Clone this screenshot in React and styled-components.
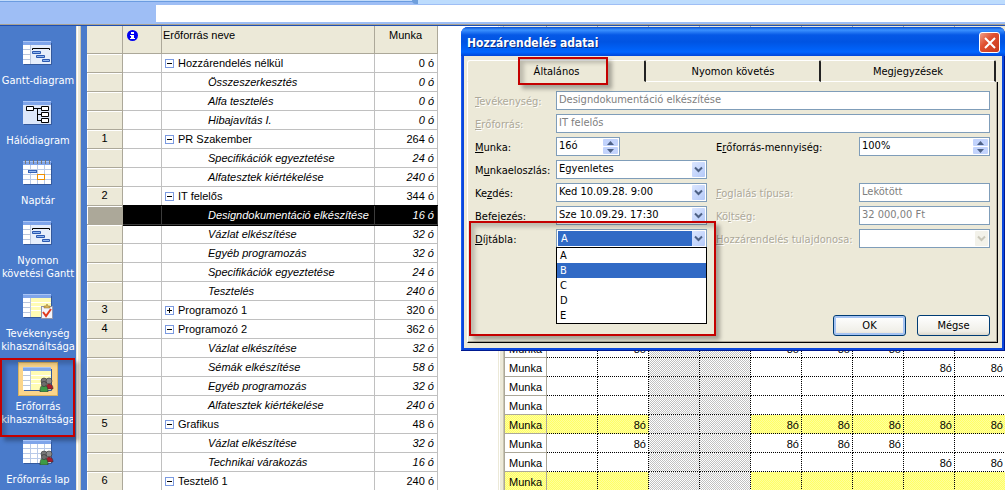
import React, { useState } from "react";
import styled, { createGlobalStyle, css } from "styled-components";

const views = [
  { icon: "gantt", lines: ["Gantt-diagram"] },
  { icon: "network", lines: ["Hálódiagram"] },
  { icon: "calendar", lines: ["Naptár"] },
  { icon: "gantt", lines: ["Nyomon", "követési Gantt"] },
  { icon: "task", lines: ["Tevékenység", "kihasználtsága"] },
  { icon: "resource", lines: ["Erőforrás", "kihasználtsága"], active: true },
  { icon: "sheet", lines: ["Erőforrás lap"] },
];

const resources = [
  { name: "Hozzárendelés nélkül", work: "0 ó", group: true },
  { name: "Összeszerkesztés", work: "0 ó" },
  { name: "Alfa tesztelés", work: "0 ó" },
  { name: "Hibajavítás I.", work: "0 ó" },
  { id: 1, name: "PR Szakember", work: "264 ó", group: true },
  { name: "Specifikációk egyeztetése", work: "24 ó" },
  { name: "Alfatesztek kiértékelése", work: "240 ó" },
  { id: 2, name: "IT felelős", work: "344 ó", group: true },
  { name: "Designdokumentáció elkészítése", work: "16 ó", selected: true },
  { name: "Vázlat elkészítése", work: "32 ó" },
  { name: "Egyéb programozás", work: "32 ó" },
  { name: "Specifikációk egyeztetése", work: "24 ó" },
  { name: "Tesztelés", work: "240 ó" },
  { id: 3, name: "Programozó 1", work: "320 ó", group: true, closed: true },
  { id: 4, name: "Programozó 2", work: "362 ó", group: true },
  { name: "Vázlat elkészítése", work: "32 ó", detail: "Munka", days: [1, 4, 5, 6] },
  { name: "Sémák elkészítése", work: "58 ó", detail: "Munka", days: [7, 8] },
  { name: "Egyéb programozás", work: "32 ó", detail: "Munka" },
  { name: "Alfatesztek kiértékelése", work: "240 ó", detail: "Munka" },
  { id: 5, name: "Grafikus", work: "48 ó", group: true, detail: "Munka", days: [1, 4, 5, 6, 7, 8] },
  { name: "Vázlat elkészítése", work: "32 ó", detail: "Munka", days: [1, 4, 5, 6] },
  { name: "Technikai várakozás", work: "16 ó", detail: "Munka", days: [7, 8] },
  { id: 6, name: "Tesztelő 1", work: "240 ó", group: true, detail: "Munka" },
];

const dayColumns = [0, 1, 2, 3, 4, 5, 6, 7, 8];
const weekend = [2, 3];
const rates = ["A", "B", "C", "D", "E"];

const People = () => (
  <g stroke="#333" strokeWidth="0.6">
    <circle cx="22" cy="15" r="3" fill="#777" />
    <circle cx="27" cy="15" r="3" fill="#8b8b8b" />
    <path d="M24 23c0-4 1-5 3-5s4 1 4 5z" fill="#a81c2c" />
    <path d="M18 26c0-5 1-7 4-7s4 3 4 7z" fill="#3d9b45" />
    <circle cx="22" cy="18" r="2.600" fill="#6d6d6d" />
  </g>
);

const ViewIcon = ({ type }) => {
  const yellow = type === "task" || type === "resource";
  const grid = type === "sheet" || type === "calendar";
  return (
    <svg width="32" height="26" viewBox="0 0 32 26">
      <path d="M2 24.500h27.500V3" fill="none" stroke="#34599c" />
      <rect x="1" y="1" width="28" height="23" fill="#fff" />
      <rect x="1" y="1" width="28" height="4" fill="#7fa5ea" />
      <path d="M1 1.500h28" stroke="#a9c5f6" />
      {type === "network" && (
        <g>
          <rect x="1" y="5" width="28" height="19" fill="#dce7fa" />
          <path d="M11 8.500h8M15.500 8v12.500M15 14.500h4M15 20.500h4" stroke="#000" fill="none" />
          <path d="M4.500 6.500h7v4h-7zM19.500 6.500h7v4h-7zM19.500 12.500h7v4h-7zM19.500 18.500h7v4h-7z" fill="#fff" stroke="#000" />
        </g>
      )}
      {grid && (
        <g>
          <rect x="1" y="5" width="28" height="19" fill="#fff" />
          <path d="M1 9.500h28M1 14.500h28M1 19.500h28M8.500 5v19M15.500 5v19M22.500 5v19" stroke="#b9cae8" />
        </g>
      )}
      {type === "calendar" && (
        <g>
          <path d="M3.500 0v4M7.500 0v4M11.500 0v4M15.500 0v4M19.500 0v4M23.500 0v4M27.500 0v4" stroke="#777" />
          <rect x="6.500" y="10.500" width="8" height="2" fill="#94b8f0" stroke="#3764b8" />
          <rect x="15.500" y="14.500" width="7" height="5" fill="#fff" stroke="#f09000" />
        </g>
      )}
      {type === "gantt" && (
        <g>
          <rect x="8" y="5" width="21" height="19" fill="#e6eefb" />
          <path d="M1 9.500h7M1 14.500h7M1 19.500h7M8.500 5v19" stroke="#b9c6dd" />
          <path d="M10.500 10V8.500h17V10" fill="none" stroke="#000" />
          <path
            d="M10.500 11.500h8v2h-8zM14.500 15.500h8v2h-8zM20.500 19.500h7v2h-7z"
            fill="#8db5ef"
            stroke="#2c59b0"
          />
        </g>
      )}
      {yellow && (
        <g>
          <rect x="8" y="5" width="21" height="19" fill="#fffcb4" />
          <path d="M8 9.500h21M8 13.500h21M8 17.500h21" stroke="#fff" />
          <path d="M1 9.500h7M1 14.500h7M1 19.500h7M8.500 5v19" stroke="#b9c6dd" />
        </g>
      )}
      {type === "task" && (
        <g>
          <rect x="19.500" y="13.500" width="11" height="12" fill="#f3f5fc" stroke="#8f96ad" />
          <path d="M22 15v-2h2l1-2 1 2h2v2z" fill="#d9b45a" stroke="#8c6d24" strokeWidth="0.5" />
          <path d="M21 19l3 4 5-7" stroke="#e03a1c" strokeWidth="2" fill="none" />
        </g>
      )}
      {(type === "resource" || type === "sheet") && <People />}
    </svg>
  );
};

const Chevron = () => (
  <svg width="9" height="7" viewBox="0 0 9 7">
    <path d="M1 1.500l3.500 3.500L8 1.500" fill="none" stroke="currentColor" strokeWidth="2" />
  </svg>
);

const Triangle = ({ down }) => (
  <svg width="7" height="4" viewBox="0 0 7 4">
    <path d={down ? "M0 0h7L3.500 4z" : "M0 4h7L3.500 0z"} fill="#4d6185" />
  </svg>
);

const Combo = ({ id, value, disabled }) => (
  <ComboBox $wide={disabled}>
    <ComboSelect id={id} disabled={disabled} defaultValue={value}>
      <option>{value}</option>
    </ComboSelect>
    <ComboArrow $disabled={disabled}>
      <Chevron />
    </ComboArrow>
  </ComboBox>
);

const Spinner = ({ id, value, narrow }) => (
  <SpinBox $narrow={narrow}>
    <SpinInput id={id} defaultValue={value} />
    <SpinButtons>
      <SpinButton aria-label="+">
        <Triangle />
      </SpinButton>
      <SpinButton aria-label="-">
        <Triangle down />
      </SpinButton>
    </SpinButtons>
  </SpinBox>
);

const AssignmentDialog = () => {
  const [rate, setRate] = useState("A");
  const [hovered, setHovered] = useState("B");
  return (
    <Dialog role="dialog" aria-labelledby="dialog-title">
      <TitleBar>
        <Title id="dialog-title">Hozzárendelés adatai</Title>
        <CloseButton aria-label="X">
          <svg width="12" height="12" viewBox="0 0 12 12">
            <path d="M1 1l10 10M11 1L1 11" stroke="#fff" strokeWidth="2" />
          </svg>
        </CloseButton>
      </TitleBar>
      <DialogBody>
        <Tabs role="tablist">
          <Tab role="tab" aria-selected="true" $active>
            Általános
            <TabMarker />
          </Tab>
          <Tab role="tab">Nyomon követés</Tab>
          <Tab role="tab">Megjegyzések</Tab>
        </Tabs>
        <TabPage>
          <Fields>
            <Label htmlFor="task" $disabled>
              <u>T</u>evékenység:
            </Label>
            <WideInput id="task" disabled defaultValue="Designdokumentáció elkészítése" />
            <Label htmlFor="resource" $disabled>
              <u>E</u>rőforrás:
            </Label>
            <WideInput id="resource" disabled defaultValue="IT felelős" />
            <Label htmlFor="work">
              <u>M</u>unka:
            </Label>
            <Spinner id="work" value="16ó" narrow />
            <Label htmlFor="units">
              E<u>r</u>őforrás-mennyiség:
            </Label>
            <Spinner id="units" value="100%" />
            <Label htmlFor="contour">
              M<u>u</u>nkaeloszlás:
            </Label>
            <Combo id="contour" value="Egyenletes" />
            <StartLabel htmlFor="start">
              Ke<u>z</u>dés:
            </StartLabel>
            <Combo id="start" value="Ked 10.09.28. 9:00" />
            <Label htmlFor="booking" $disabled>
              <u>F</u>oglalás típusa:
            </Label>
            <TextInput id="booking" disabled defaultValue="Lekötött" />
            <Label htmlFor="finish">
              <u>B</u>efejezés:
            </Label>
            <Combo id="finish" value="Sze 10.09.29. 17:30" />
            <Label htmlFor="cost" $disabled>
              Kö<u>l</u>tség:
            </Label>
            <TextInput id="cost" disabled defaultValue="32 000,00 Ft" />
            <Label htmlFor="rate">
              <u>D</u>íjtábla:
            </Label>
            <ComboBox>
              <RateSelect id="rate" value={rate} onChange={(e) => setRate(e.target.value)}>
                {rates.map((val) => (
                  <option key={val}>{val}</option>
                ))}
              </RateSelect>
              <ComboArrow>
                <Chevron />
              </ComboArrow>
              <RateList role="listbox">
                {rates.map((val) => (
                  <RateOption
                    key={val}
                    role="option"
                    aria-selected={val === hovered}
                    $active={val === hovered}
                    onMouseEnter={() => setHovered(val)}
                    onClick={() => setRate(val)}
                  >
                    {val}
                  </RateOption>
                ))}
              </RateList>
            </ComboBox>
            <Label htmlFor="owner" $disabled>
              <u>H</u>ozzárendelés tulajdonosa:
            </Label>
            <Combo id="owner" value="" disabled />
          </Fields>
          <Actions>
            <ActionButton $primary>OK</ActionButton>
            <ActionButton>Mégse</ActionButton>
          </Actions>
          <RateMarker />
        </TabPage>
      </DialogBody>
    </Dialog>
  );
};

const App = () => {
  return (
    <Page>
      <GlobalStyle />
      <ToolbarEdge>
        <ToolbarEnd />
      </ToolbarEdge>
      <EntryBar>
        <EntryInput aria-label="Erőforrás neve" />
      </EntryBar>
      <Workspace>
        <ViewBar>
          {views.map((val) => (
            <ViewLink href="#" key={val.lines.join(" ")}>
              <IconFrame $active={val.active}>
                <ViewIcon type={val.icon} />
              </IconFrame>
              {val.lines.map((line) => (
                <span key={line}>{line}</span>
              ))}
              {val.active && <ViewMarker />}
            </ViewLink>
          ))}
        </ViewBar>
        <Splitter />
        <ActiveStrip />
        <SheetPane>
          <SheetTable>
            <colgroup>
              <col width="36" />
              <col width="39" />
              <col width="213" />
              <col width="63" />
            </colgroup>
            <thead>
              <tr>
                <HeadCell />
                <HeadCell>
                  <svg width="11" height="11" viewBox="0 0 11 11">
                    <circle cx="5.500" cy="5.500" r="5.500" fill="#0000f0" />
                    <path d="M4 2h3v2H4zM3 5h4v3h1v1H3V8h1V6H3z" fill="#fff" />
                  </svg>
                </HeadCell>
                <HeadCell>Erőforrás neve</HeadCell>
                <HeadCell $center>Munka</HeadCell>
              </tr>
            </thead>
            <tbody>
              {resources.map((val, i) => (
                <tr key={i}>
                  <RowHead $selected={val.selected}>{val.id}</RowHead>
                  <Cell $selected={val.selected} />
                  <NameCell $selected={val.selected} $group={val.group}>
                    {val.group && (
                      <Toggle aria-label={val.name}>
                        <svg width="7" height="7" viewBox="0 0 7 7">
                          <path d={val.closed ? "M1 3.500h5M3.500 1v5" : "M1 3.500h5"} stroke="#000" />
                        </svg>
                      </Toggle>
                    )}
                    {val.name}
                  </NameCell>
                  <WorkCell $selected={val.selected} $group={val.group}>
                    {val.work}
                  </WorkCell>
                </tr>
              ))}
            </tbody>
          </SheetTable>
        </SheetPane>
        <Splitter $wide />
        <TimePane>
          <TimeTable>
            <colgroup>
              <col width="43" />
              {dayColumns.map((day) => (
                <col key={day} width="51" />
              ))}
            </colgroup>
            <thead>
              <tr>
                <HeadCell />
                {dayColumns.map((day) => (
                  <HeadCell key={day} />
                ))}
              </tr>
            </thead>
            <tbody>
              {resources.map((val, i) => (
                <tr key={i}>
                  <DetailCell $group={val.group}>{val.detail}</DetailCell>
                  {dayColumns.map((day) => (
                    <DayCell key={day} $group={val.group} $weekend={weekend.includes(day)}>
                      {val.days && val.days.includes(day) ? "8ó" : ""}
                    </DayCell>
                  ))}
                </tr>
              ))}
            </tbody>
          </TimeTable>
        </TimePane>
      </Workspace>
      <AssignmentDialog />
    </Page>
  );
};

export default App;

const uiFont = `"DejaVu Sans Condensed", "DejaVu Sans", sans-serif`;
const sheetFont = `"Liberation Sans", Arial, sans-serif`;

// 1px checkerboard, dot is a hex value without the #
const hatch = (dot, base) => css`
  background-color: ${base};
  background-image: url("data:image/svg+xml,%3Csvg xmlns='http://www.w3.org/2000/svg' width='4' height='4' shape-rendering='crispEdges'%3E%3Cpath fill='%23${dot}' d='M0 0h1v1H0zM2 0h1v1H2zM1 1h1v1H1zM3 1h1v1H3zM0 2h1v1H0zM2 2h1v1H2zM1 3h1v1H1zM3 3h1v1H3z'/%3E%3C/svg%3E");
  background-size: 4px 4px;
`;
const groupHatch = hatch("ffff66", "#ffff9c");
const weekendHatch = hatch("c0c0c0", "#fff");

const GlobalStyle = createGlobalStyle`
  * {
    box-sizing: border-box;
  }
  body {
    margin: 0;
    background: #fff;
    font-family: ${uiFont};
    font-size: 11px;
    color: #000;
  }
  button, input, select {
    font: inherit;
    color: inherit;
    margin: 0;
    border-radius: 0;
  }
  svg {
    display: block;
    flex: none;
  }
`;

const Page = styled.div`
  position: relative;
  display: flex;
  flex-direction: column;
  height: 100vh;
  overflow: hidden;
`;

const ToolbarEdge = styled.div`
  display: flex;
  justify-content: flex-end;
  height: 5px;
  background: linear-gradient(#c3dcfa 1px, #6b9ce0 1px 2px, #9ebef5 2px);
`;

const ToolbarEnd = styled.div`
  width: 59%;
  height: 4px;
  border-left: 6px solid #6f9fdc;
  border-bottom-left-radius: 4px;
  background: #bddcfd;
`;

const EntryBar = styled.div`
  display: flex;
  padding: 0 0 3px 156px;
  background: #9ebef5;
  border-bottom: 1px solid #1d4fb4;
  box-shadow: inset 0 -1px #a9a18f;
`;

const EntryInput = styled.input`
  flex: 1;
  height: 17px;
  border: 0;
  background: #fff;
`;

const Workspace = styled.div`
  flex: 1;
  display: flex;
  min-height: 0;
`;

const ViewBar = styled.nav`
  width: 76px;
  flex: none;
  padding-top: 14px;
  background: #4a7bcb;
`;

const ViewLink = styled.a`
  position: relative;
  display: flex;
  flex-direction: column;
  align-items: center;
  padding-bottom: 13px;
  line-height: 13px;
  color: #fff;
  text-decoration: none;
  white-space: nowrap;
`;

const IconFrame = styled.div`
  margin-bottom: 8px;
  ${(props) =>
    props.$active &&
    css`
      background: #fbd58a;
      box-shadow: 0 0 0 3px #fbd58a, 0 0 0 4px #d9b25f;
    `}
`;

const Marker = styled.div`
  position: absolute;
  border: 2px solid #c40000;
  box-shadow: 4px 4px 4px rgba(0, 0, 0, 0.3), inset 4px 4px 4px rgba(0, 0, 0, 0.2);
  pointer-events: none;
`;

const ViewMarker = styled(Marker)`
  inset: -8px 1px 2px 0;
`;

const TabMarker = styled(Marker)`
  inset: -4px 36px -4px 50px;
`;

const RateMarker = styled(Marker)`
  top: 139px;
  bottom: 6px;
  left: 1px;
  width: 247px;
`;

const Splitter = styled.div`
  width: ${(props) => (props.$wide ? "6px" : "5px")};
  flex: none;
  background: linear-gradient(90deg, #ece9d8 1px, #fff 1px 2px, #ece9d8 2px);
  border-right: 1px solid #c9c5b2;
`;

const ActiveStrip = styled.div`
  width: 6px;
  flex: none;
  background: #4a7bcb;
`;

const SheetPane = styled.div`
  width: 411px;
  flex: none;
  overflow: hidden;
  font-family: ${sheetFont};
`;

const TimePane = styled.div`
  flex: 1;
  min-width: 0;
  overflow: hidden;
  font-family: ${sheetFont};
`;

const SheetTable = styled.table`
  width: 351px;
  table-layout: fixed;
  border-collapse: separate;
  border-spacing: 0;
  line-height: 18px;
`;

const TimeTable = styled(SheetTable)`
  width: 502px;
  line-height: 15px;
`;

const HeadCell = styled.th`
  height: 28px;
  padding: 3px 2px 0 1px;
  vertical-align: top;
  text-align: ${(props) => (props.$center ? "center" : "left")};
  font-weight: normal;
  line-height: 13px;
  background: #ece9d8;
  border-right: 1px solid #aca899;
  border-bottom: 1px solid #aca899;
  white-space: nowrap;

  svg {
    margin: 1px 0 0 3px;
  }
`;

const RowHead = styled.th`
  height: 19px;
  padding: 0;
  font-weight: normal;
  line-height: 16px;
  vertical-align: top;
  background: ${(props) => (props.$selected ? "#aca899" : "#ece9d8")};
  border-right: 1px solid #aca899;
  border-bottom: 1px solid #aca899;
  box-shadow: inset 1px 1px #fff;
`;

const Cell = styled.td`
  height: 19px;
  padding: 0;
  border-right: 1px solid #c0c0c0;
  border-bottom: 1px solid #c0c0c0;
  white-space: nowrap;
  font-style: ${(props) => (props.$group ? "normal" : "italic")};
  ${(props) =>
    props.$selected &&
    css`
      position: relative;
      color: #fff;
      background: #000;
      border-color: #3c3c3c;
      box-shadow: 0 -1px #000, 0 1px #000;
    `}
`;

const NameCell = styled(Cell)`
  padding-left: ${(props) => (props.$group ? "3px" : "46px")};
`;

const WorkCell = styled(Cell)`
  padding-right: 3px;
  text-align: right;
`;

const Toggle = styled.button`
  width: 9px;
  height: 9px;
  margin-right: 4px;
  padding: 0;
  border: 1px solid #7b9ae0;
  background: #fff;
`;

const DetailCell = styled.td`
  height: 19px;
  padding: 3px 0 0 4px;
  border-left: 1px solid #aca899;
  border-right: 1px solid #aca899;
  border-bottom: 1px solid #aca899;
  ${(props) => props.$group && groupHatch}
`;

const DayCell = styled.td`
  height: 19px;
  padding: 3px 2px 0 0;
  text-align: right;
  border-right: 1px dotted #000;
  border-bottom: 1px dotted #000;
  ${(props) => props.$group && groupHatch}
  ${(props) => props.$weekend && weekendHatch}
`;

const Dialog = styled.section`
  position: absolute;
  top: 27px;
  right: 0;
  width: 544px;
  padding: 0 3px 3px;
  border-radius: 7px 7px 0 0;
  background: #0a46dc;
  box-shadow: inset -1px -1px #001a90, inset 1px 0 #1c5cf0;
`;

const TitleBar = styled.header`
  display: flex;
  align-items: center;
  justify-content: space-between;
  height: 29px;
  margin: 0 -3px;
  padding: 2px 5px 0 6px;
  border-radius: 7px 7px 0 0;
  background: linear-gradient(#0a4fd0, #3b91ff 3px, #0558e6 8px, #0054e3 15px, #0066ff 25px, #0046d8);
`;

const Title = styled.h1`
  margin: 0;
  font-family: ${uiFont};
  font-size: 12px;
  line-height: 16px;
  color: #fff;
  text-shadow: 1px 1px #0a2a80;
`;

const CloseButton = styled.button`
  display: flex;
  align-items: center;
  justify-content: center;
  width: 21px;
  height: 21px;
  padding: 0;
  border: 1px solid #fff;
  border-radius: 3px;
  background: linear-gradient(135deg, #f0a08a, #e05030 40%, #c8381a);
`;

const DialogBody = styled.div`
  padding: 4px 4px 5px 3px;
  background: #ece9d8;
`;

const Tabs = styled.div`
  display: flex;
  padding-right: 2px;
`;

const Tab = styled.button`
  position: relative;
  z-index: ${(props) => (props.$active ? 1 : 0)};
  flex: ${(props) => (props.$active ? "0 0 179px" : "1")};
  height: 22px;
  padding: 0 0 0 1px;
  border: 0;
  border-top: 1px solid #fff;
  border-right: 2px solid #222;
  border-bottom: 1px solid ${(props) => (props.$active ? "#ece9d8" : "#fff")};
  border-left: ${(props) => (props.$active ? "1px solid #fff" : "0")};
  border-radius: 3px 2px 0 0;
  background: #ece9d8;
`;

const TabPage = styled.div`
  position: relative;
  display: flex;
  flex-direction: column;
  gap: 66px;
  padding: 9px 7px 6px;
  border-left: 1px solid #fff;
  border-right: 1px solid #000;
  border-bottom: 1px solid #000;
  box-shadow: inset -1px -1px #aca899;
`;

const Fields = styled.div`
  display: grid;
  grid-template-columns: 81px 160px 143px minmax(0, 1fr);
  grid-auto-rows: 20px;
  row-gap: 3px;
`;

const Label = styled.label`
  padding-top: 3px;
  line-height: 16px;
  white-space: nowrap;
  ${(props) =>
    props.$disabled &&
    css`
      color: #aca899;
      text-shadow: 1px 1px #fff;
    `}
`;

const StartLabel = styled(Label)`
  grid-column: 1;
`;

const field = css`
  border: 1px solid #7f9db9;
  background: #fff;
`;

const TextInput = styled.input`
  ${field}
  min-width: 0;
  height: 19px;
  padding: 0 2px 2px;

  &:disabled {
    color: #808080;
  }
`;

const WideInput = styled(TextInput)`
  grid-column: 2 / -1;
`;

const SpinBox = styled.div`
  ${field}
  display: flex;
  height: 19px;
  padding: 1px;
  width: ${(props) => (props.$narrow ? "64px" : "auto")};
`;

const SpinInput = styled.input`
  flex: 1;
  min-width: 0;
  padding: 0 1px 2px;
  border: 0;
  outline: 0;
`;

const SpinButtons = styled.div`
  display: flex;
  flex-direction: column;
  gap: 1px;
  width: 15px;
`;

const SpinButton = styled.button`
  flex: 1;
  display: flex;
  align-items: center;
  justify-content: center;
  padding: 0;
  border: 0;
  border-radius: 1px;
  background: #c2d3fc;
`;

const ComboBox = styled.div`
  ${field}
  position: relative;
  display: flex;
  height: 19px;
  padding: 1px;
  margin-right: ${(props) => (props.$wide ? "0" : "9px")};
`;

const ComboSelect = styled.select`
  appearance: none;
  flex: 1;
  min-width: 0;
  padding: 0 1px 2px;
  border: 0;
  outline: 0;
  background: #fff;
`;

const RateSelect = styled(ComboSelect)`
  padding: 0 3px;
  color: #fff;
  background: #316ac5;
`;

const ComboArrow = styled.span`
  display: flex;
  align-items: center;
  justify-content: center;
  width: 13px;
  border-radius: 1px;
  color: ${(props) => (props.$disabled ? "#c9c7ba" : "#4d6185")};
  background: ${(props) => (props.$disabled ? "#f3f2ea" : "linear-gradient(135deg, #dbe6ff, #b4c9f8)")};
  pointer-events: none;
`;

const RateList = styled.ul`
  position: absolute;
  z-index: 1;
  top: 17px;
  left: -1px;
  right: -1px;
  margin: 0;
  padding: 0;
  list-style: none;
  border: 1px solid #000;
  background: #fff;
`;

const RateOption = styled.li`
  padding-left: 3px;
  line-height: 15px;
  color: ${(props) => (props.$active ? "#fff" : "#000")};
  background: ${(props) => (props.$active ? "#316ac5" : "#fff")};
`;

const Actions = styled.div`
  display: flex;
  justify-content: flex-end;
  gap: 11px;
`;

const ActionButton = styled.button`
  width: 73px;
  height: 21px;
  padding: 0;
  border: 1px solid #003c74;
  border-radius: 3px;
  background: linear-gradient(#fff, #f0efe8 80%, #dcd8cc);
  ${(props) => props.$primary && "box-shadow: inset 0 0 0 2px #a6c4f3;"}
`;
